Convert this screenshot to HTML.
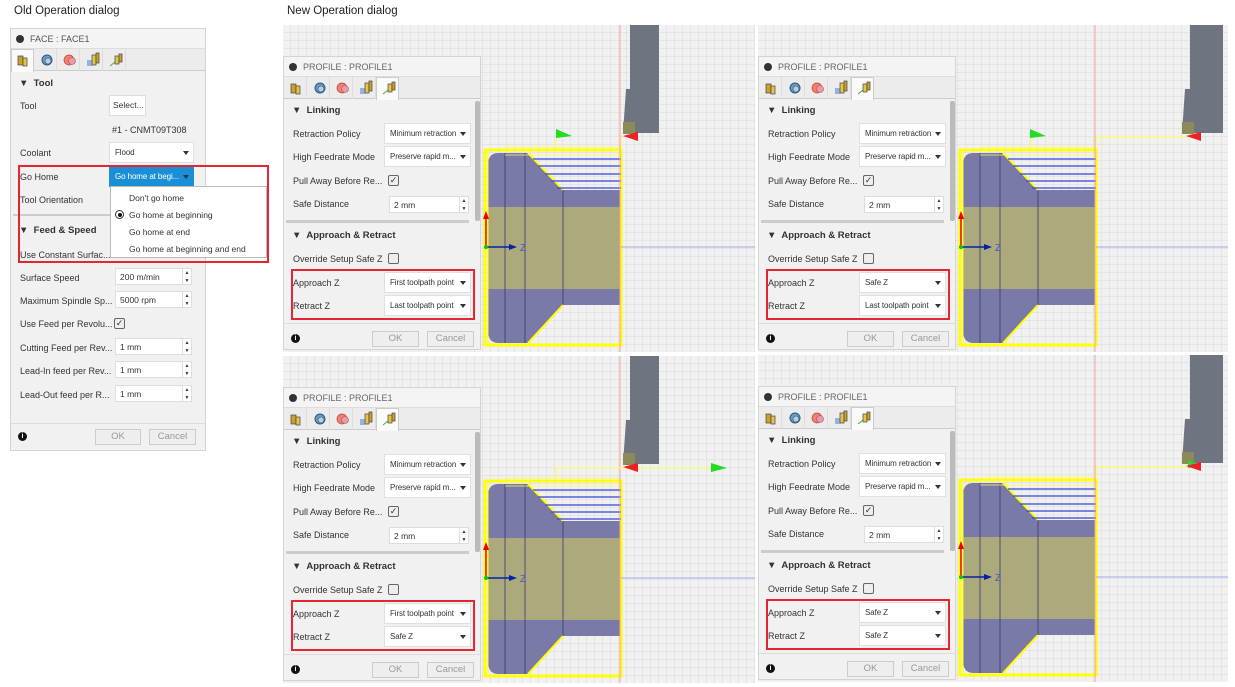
<!DOCTYPE html>
<html><head><meta charset="utf-8"><style>
*{box-sizing:border-box;margin:0;padding:0}
body{width:1235px;height:687px;background:#fff;position:relative;overflow:hidden;font-family:"Liberation Sans",sans-serif;color:#333}
.a{position:absolute}
.cap{font-size:11.5px;color:#222}
.panel{position:absolute;width:472px;height:327px;overflow:hidden}
.vp{position:absolute;left:0;top:0}
.dlg{position:absolute;left:0;top:31px;width:198px;height:294px;background:#f1f1f1;border:1px solid #d4d4d4;font-size:9px}
.title{position:absolute;left:0;top:0;width:100%;height:20px;border-bottom:1px solid #ddd;background:#f4f4f4;color:#666;font-size:9px;line-height:20px;padding-left:19px}
.dot{position:absolute;left:5px;top:6px;width:8px;height:8px;border-radius:50%;background:#333}
.tabs{position:absolute;left:0;top:20px;width:100%;height:22px;border-bottom:1px solid #ccc;background:#ececec}
.tab{position:absolute;top:0;width:23px;height:22px;border-right:1px solid #ddd}
.tab.sel{background:#fafafa;border:1px solid #ccc;border-bottom:none;height:23px}
.lbl{position:absolute;left:9px;font-size:9px;color:#333}
.hdr{position:absolute;left:8px;font-size:9.5px;font-weight:bold;color:#333}
.dd{position:absolute;left:100px;width:87px;height:21px;background:#fff;border:1px solid #e0e0e0;font-size:8px;line-height:19px;padding-left:5px;color:#333;white-space:nowrap;overflow:hidden;letter-spacing:-0.1px}
.dd:after{content:"";position:absolute;right:4px;top:8px;border-left:3px solid transparent;border-right:3px solid transparent;border-top:4px solid #333}
.inp{position:absolute;background:#fff;border:1px solid #ddd;font-size:8.5px;line-height:17px;padding-left:4px}
.spin{position:absolute;right:0;top:0;width:9px;height:100%;border-left:1px solid #ddd;font-size:5px;line-height:8px;text-align:center;color:#333}
.cb{position:absolute;width:11px;height:11px;border:1px solid #666;border-radius:2px;background:#eee;font-size:9px;line-height:9px;text-align:center}
.sep{position:absolute;left:2px;width:183px;height:3px;background:#ccc}
.red{position:absolute;border:2px solid #e32630}
.btn{position:absolute;height:16px;border:1px solid #ccc;background:#eee;color:#999;font-size:9.5px;text-align:center;line-height:14px}
.info{position:absolute;width:9px;height:9px;border-radius:50%;background:#111;color:#fff;font-size:7px;font-weight:bold;text-align:center;line-height:9px}
.sb{position:absolute;left:191px;top:44px;width:5px;height:120px;background:#bbb;border-radius:2px}
</style></head><body>
<div class="a cap" style="left:14px;top:5px">Old Operation dialog</div>
<div class="a cap" style="left:287px;top:5px">New Operation dialog</div>

<svg width="0" height="0" style="position:absolute">
<defs>
<pattern id="g" width="8" height="8" patternUnits="userSpaceOnUse"><rect width="8" height="8" fill="#f1f1f1"/><path d="M8 0V8M0 8H8" stroke="#d9d9d9" stroke-width="1"/></pattern>
<g id="tabicons">
<g transform="translate(7,5)"><rect x="0" y="2" width="5" height="9" fill="#c9a22a" stroke="#444" stroke-width=".7"/><rect x="5" y="4" width="4" height="8" fill="#e6c34a" stroke="#444" stroke-width=".7"/></g>
<g transform="translate(30,5)"><circle cx="6" cy="6" r="5" fill="#6a9ac0" stroke="#2a5a80"/><circle cx="7" cy="7" r="3" fill="#bcd" stroke="#2a5a80" stroke-width=".6"/></g>
<g transform="translate(53,5)"><circle cx="5" cy="6" r="5" fill="#f08070" stroke="#c04030" stroke-width=".7"/><circle cx="8" cy="7" r="3.5" fill="#e9a" stroke="#a55" stroke-width=".6"/></g>
<g transform="translate(76,4)"><path d="M0 8H6M0 10H6M0 12H6" stroke="#3a7bd5"/><rect x="5" y="2" width="4" height="10" fill="#e6c34a" stroke="#444" stroke-width=".7"/><rect x="9" y="0" width="3" height="10" fill="#c9a22a" stroke="#444" stroke-width=".7"/></g>
<g transform="translate(99,4)"><path d="M0 13L5 9" stroke="#3b3"/><rect x="5" y="3" width="4" height="8" fill="#e6c34a" stroke="#444" stroke-width=".7"/><rect x="9" y="1" width="3" height="8" fill="#c9a22a" stroke="#444" stroke-width=".7"/></g>
</g>
<g id="part">
<rect x="202" y="125" width="136" height="195" fill="none" stroke="#ffff00" stroke-width="3"/>
<path d="M215 128H245L280 165H337V280H280L245 318H215Q205 318 205 305V140Q205 128 215 128Z" fill="#7a7aa8"/>
<path d="M205 182H337V264H205Z" fill="#aca97c"/>
<path d="M222 128V318M242 128V318M280 165V280" stroke="#3a3a6a" stroke-width=".8"/>
<path d="M245 128L280 165M245 318L280 280" stroke="#ffff00" stroke-width="2"/>
<path d="M205 128V318" stroke="#ffff00" stroke-width="1"/>
<path d="M250 134H338M255 141H338M262 149H338M268 156H338M274 163H338" stroke="#3344dd" stroke-width="1.2"/>
<path d="M222 122H337M222 126H337M222 130H337" stroke="#ffff44" stroke-width=".8"/>
<path d="M337 0V327" stroke="#f4a0a0" stroke-width="1"/>
<path d="M338 222H472" stroke="#a0a8ee" stroke-width="1"/>
<path d="M203 222V192" stroke="#e00" stroke-width="1.5"/><path d="M200 194L203 186L206 194Z" fill="#e00"/>
<path d="M203 222H228" stroke="#0022aa" stroke-width="1.5"/><path d="M226 219L234 222L226 225Z" fill="#0022aa"/>
<circle cx="203" cy="222" r="2" fill="#0c0"/>
<text x="237" y="226" font-size="10" fill="#4455cc" font-family="Liberation Sans">Z</text>
</g>
</defs></svg>

<!-- OLD DIALOG -->
<div class="a" style="left:10px;top:28px;width:196px;height:423px;background:#f1f1f1;border:1px solid #d4d4d4;font-size:9px">
 <div class="title" style="color:#555">FACE : FACE1<div class="dot"></div></div>
 <div class="tabs"><div class="tab sel" style="left:0"></div><div class="tab" style="left:23px"></div><div class="tab" style="left:46px"></div><div class="tab" style="left:69px"></div><div class="tab" style="left:92px"></div>
 <svg class="a" style="left:0;top:0" width="120" height="22"><use href="#tabicons"/></svg></div>
 <div class="hdr" style="top:49px">▼&nbsp; Tool</div>
 <div class="lbl" style="top:72px">Tool</div>
 <div class="inp" style="left:98px;top:66px;width:37px;height:21px;line-height:19px;padding-left:3px">Select...</div>
 <div class="lbl" style="left:101px;top:96px">#1 - CNMT09T308</div>
 <div class="lbl" style="top:119px">Coolant</div>
 <div class="dd" style="left:98px;top:113px;width:85px">Flood</div>
 <div class="lbl" style="top:143px">Go Home</div>
 <div class="dd" style="left:98px;top:137px;width:85px;background:#1a8fd6;border-color:#1a8fd6;color:#fff">Go home at begi...</div>
 <div class="lbl" style="top:166px">Tool Orientation</div>
 <div class="sep" style="top:185px;width:190px;height:2px"></div>
 <div class="hdr" style="top:196px">▼&nbsp; Feed &amp; Speed</div>
 <div class="lbl" style="top:221px">Use Constant Surfac...</div>
 <div class="lbl" style="top:244px">Surface Speed</div>
 <div class="inp" style="left:104px;top:239px;width:77px;height:17px">200 m/min<div class="spin">▲<br>▼</div></div>
 <div class="lbl" style="top:267px">Maximum Spindle Sp...</div>
 <div class="inp" style="left:104px;top:262px;width:77px;height:17px">5000 rpm<div class="spin">▲<br>▼</div></div>
 <div class="lbl" style="top:290px">Use Feed per Revolu...</div>
 <div class="cb" style="left:103px;top:289px">✓</div>
 <div class="lbl" style="top:314px">Cutting Feed per Rev...</div>
 <div class="inp" style="left:104px;top:309px;width:77px;height:17px">1 mm<div class="spin">▲<br>▼</div></div>
 <div class="lbl" style="top:337px">Lead-In feed per Rev...</div>
 <div class="inp" style="left:104px;top:332px;width:77px;height:17px">1 mm<div class="spin">▲<br>▼</div></div>
 <div class="lbl" style="top:361px">Lead-Out feed per R...</div>
 <div class="inp" style="left:104px;top:356px;width:77px;height:17px">1 mm<div class="spin">▲<br>▼</div></div>
 <div class="a" style="left:0;top:394px;width:194px;height:1px;background:#ddd"></div>
 <div class="info" style="left:7px;top:403px">i</div>
 <div class="btn" style="left:84px;top:400px;width:46px">OK</div>
 <div class="btn" style="left:138px;top:400px;width:47px">Cancel</div>
</div>
<div class="a" style="left:110px;top:186px;width:157px;height:72px;background:#fff;border:1px solid #bbb;font-size:8.5px;color:#333">
 <div class="a" style="left:18px;top:6px">Don't go home</div>
 <div class="a" style="left:4px;top:23px;width:9px;height:9px;border-radius:50%;border:1px solid #333;background:#fff"><div class="a" style="left:1.5px;top:1.5px;width:4px;height:4px;border-radius:50%;background:#111"></div></div>
 <div class="a" style="left:18px;top:23px">Go home at beginning</div>
 <div class="a" style="left:18px;top:40px">Go home at end</div>
 <div class="a" style="left:18px;top:57px">Go home at beginning and end</div>
</div>
<div class="red" style="left:18px;top:165px;width:251px;height:98px"></div>

<!-- PANEL 1 -->
<div class="panel" style="left:283px;top:25px">
 <svg class="vp" width="472" height="327"><rect width="472" height="327" fill="url(#g)"/>
 <path d="M347 0H376V108H340L343 64H347Z" fill="#6f7580"/><rect x="340" y="97" width="12" height="12" fill="#8a8a5a"/>
 <use href="#part"/>
 <path d="M273 112V124M338 112V125" stroke="#ffff44"/>
 <path d="M273 104L289 111L273 113Z" fill="#22dd22"/><path d="M340 111L355 107V116Z" fill="#e22"/></svg>
 <div class="dlg">
  <div class="title">PROFILE : PROFILE1<div class="dot"></div></div>
  <div class="tabs"><div class="tab" style="left:0"></div><div class="tab" style="left:23px"></div><div class="tab" style="left:46px"></div><div class="tab" style="left:69px"></div><div class="tab sel" style="left:92px"></div>
  <svg class="a" style="left:0;top:0" width="120" height="22"><use href="#tabicons"/></svg></div>
  <div class="sb"></div>
  <div class="hdr" style="top:48px">▼&nbsp; Linking</div>
  <div class="lbl" style="top:72px">Retraction Policy</div><div class="dd" style="top:66px">Minimum retraction</div>
  <div class="lbl" style="top:95px">High Feedrate Mode</div><div class="dd" style="top:89px">Preserve rapid m...</div>
  <div class="lbl" style="top:119px">Pull Away Before Re...</div><div class="cb" style="left:104px;top:118px">✓</div>
  <div class="lbl" style="top:142px">Safe Distance</div><div class="inp" style="left:105px;top:139px;width:80px;height:17px">2 mm<div class="spin">▲<br>▼</div></div>
  <div class="sep" style="top:163px"></div>
  <div class="hdr" style="top:173px">▼&nbsp; Approach &amp; Retract</div>
  <div class="lbl" style="top:197px">Override Setup Safe Z</div><div class="cb" style="left:104px;top:196px"></div>
  <div class="lbl" style="top:221px">Approach Z</div><div class="dd" style="top:215px">First toolpath point</div>
  <div class="lbl" style="top:244px">Retract Z</div><div class="dd" style="top:238px">Last toolpath point</div>
  <div class="red" style="left:7px;top:212px;width:184px;height:51px"></div>
  <div class="a" style="left:0;top:266px;width:196px;height:1px;background:#ddd"></div>
  <div class="info" style="left:7px;top:277px">i</div>
  <div class="btn" style="left:88px;top:274px;width:47px">OK</div>
  <div class="btn" style="left:143px;top:274px;width:47px">Cancel</div>
 </div>
</div>

<!-- PANEL 2 -->
<div class="panel" style="left:758px;top:25px;width:470px">
 <svg class="vp" width="470" height="327"><rect width="470" height="327" fill="url(#g)"/>
 <path d="M432 0H465V108H424L427 64H432Z" fill="#6f7580"/><rect x="424" y="97" width="12" height="12" fill="#8a8a5a"/>
 <use href="#part"/>
 <path d="M273 112V124M338 125V112H429" stroke="#ffff44" fill="none"/>
 <path d="M272 104L288 111L272 113Z" fill="#22dd22"/><path d="M428 111L443 107V116Z" fill="#e22"/></svg>
 <div class="dlg">
  <div class="title">PROFILE : PROFILE1<div class="dot"></div></div>
  <div class="tabs"><div class="tab" style="left:0"></div><div class="tab" style="left:23px"></div><div class="tab" style="left:46px"></div><div class="tab" style="left:69px"></div><div class="tab sel" style="left:92px"></div>
  <svg class="a" style="left:0;top:0" width="120" height="22"><use href="#tabicons"/></svg></div>
  <div class="sb"></div>
  <div class="hdr" style="top:48px">▼&nbsp; Linking</div>
  <div class="lbl" style="top:72px">Retraction Policy</div><div class="dd" style="top:66px">Minimum retraction</div>
  <div class="lbl" style="top:95px">High Feedrate Mode</div><div class="dd" style="top:89px">Preserve rapid m...</div>
  <div class="lbl" style="top:119px">Pull Away Before Re...</div><div class="cb" style="left:104px;top:118px">✓</div>
  <div class="lbl" style="top:142px">Safe Distance</div><div class="inp" style="left:105px;top:139px;width:80px;height:17px">2 mm<div class="spin">▲<br>▼</div></div>
  <div class="sep" style="top:163px"></div>
  <div class="hdr" style="top:173px">▼&nbsp; Approach &amp; Retract</div>
  <div class="lbl" style="top:197px">Override Setup Safe Z</div><div class="cb" style="left:104px;top:196px"></div>
  <div class="lbl" style="top:221px">Approach Z</div><div class="dd" style="top:215px">Safe Z</div>
  <div class="lbl" style="top:244px">Retract Z</div><div class="dd" style="top:238px">Last toolpath point</div>
  <div class="red" style="left:7px;top:212px;width:184px;height:51px"></div>
  <div class="a" style="left:0;top:266px;width:196px;height:1px;background:#ddd"></div>
  <div class="info" style="left:7px;top:277px">i</div>
  <div class="btn" style="left:88px;top:274px;width:47px">OK</div>
  <div class="btn" style="left:143px;top:274px;width:47px">Cancel</div>
 </div>
</div>

<!-- PANEL 3 -->
<div class="panel" style="left:283px;top:356px">
 <svg class="vp" width="472" height="327"><rect width="472" height="327" fill="url(#g)"/>
 <path d="M347 0H376V108H340L343 64H347Z" fill="#6f7580"/><rect x="340" y="97" width="12" height="12" fill="#8a8a5a"/>
 <use href="#part"/>
 <path d="M273 124V112H430" stroke="#ffff44" fill="none"/>
 <path d="M428 107L444 112L428 116Z" fill="#22dd22"/><path d="M340 111L355 107V116Z" fill="#e22"/></svg>
 <div class="dlg">
  <div class="title">PROFILE : PROFILE1<div class="dot"></div></div>
  <div class="tabs"><div class="tab" style="left:0"></div><div class="tab" style="left:23px"></div><div class="tab" style="left:46px"></div><div class="tab" style="left:69px"></div><div class="tab sel" style="left:92px"></div>
  <svg class="a" style="left:0;top:0" width="120" height="22"><use href="#tabicons"/></svg></div>
  <div class="sb"></div>
  <div class="hdr" style="top:48px">▼&nbsp; Linking</div>
  <div class="lbl" style="top:72px">Retraction Policy</div><div class="dd" style="top:66px">Minimum retraction</div>
  <div class="lbl" style="top:95px">High Feedrate Mode</div><div class="dd" style="top:89px">Preserve rapid m...</div>
  <div class="lbl" style="top:119px">Pull Away Before Re...</div><div class="cb" style="left:104px;top:118px">✓</div>
  <div class="lbl" style="top:142px">Safe Distance</div><div class="inp" style="left:105px;top:139px;width:80px;height:17px">2 mm<div class="spin">▲<br>▼</div></div>
  <div class="sep" style="top:163px"></div>
  <div class="hdr" style="top:173px">▼&nbsp; Approach &amp; Retract</div>
  <div class="lbl" style="top:197px">Override Setup Safe Z</div><div class="cb" style="left:104px;top:196px"></div>
  <div class="lbl" style="top:221px">Approach Z</div><div class="dd" style="top:215px">First toolpath point</div>
  <div class="lbl" style="top:244px">Retract Z</div><div class="dd" style="top:238px">Safe Z</div>
  <div class="red" style="left:7px;top:212px;width:184px;height:51px"></div>
  <div class="a" style="left:0;top:266px;width:196px;height:1px;background:#ddd"></div>
  <div class="info" style="left:7px;top:277px">i</div>
  <div class="btn" style="left:88px;top:274px;width:47px">OK</div>
  <div class="btn" style="left:143px;top:274px;width:47px">Cancel</div>
 </div>
</div>

<!-- PANEL 4 -->
<div class="panel" style="left:758px;top:355px;width:470px">
 <svg class="vp" width="470" height="327"><rect width="470" height="327" fill="url(#g)"/>
 <path d="M432 0H465V108H424L427 64H432Z" fill="#6f7580"/><rect x="424" y="97" width="12" height="12" fill="#8a8a5a"/>
 <use href="#part"/>
 <path d="M338 125V112H429" stroke="#ffff44" fill="none"/>
 <path d="M430 105L443 111L430 113Z" fill="#22dd22"/><path d="M428 111L443 107V116Z" fill="#e22"/></svg>
 <div class="dlg">
  <div class="title">PROFILE : PROFILE1<div class="dot"></div></div>
  <div class="tabs"><div class="tab" style="left:0"></div><div class="tab" style="left:23px"></div><div class="tab" style="left:46px"></div><div class="tab" style="left:69px"></div><div class="tab sel" style="left:92px"></div>
  <svg class="a" style="left:0;top:0" width="120" height="22"><use href="#tabicons"/></svg></div>
  <div class="sb"></div>
  <div class="hdr" style="top:48px">▼&nbsp; Linking</div>
  <div class="lbl" style="top:72px">Retraction Policy</div><div class="dd" style="top:66px">Minimum retraction</div>
  <div class="lbl" style="top:95px">High Feedrate Mode</div><div class="dd" style="top:89px">Preserve rapid m...</div>
  <div class="lbl" style="top:119px">Pull Away Before Re...</div><div class="cb" style="left:104px;top:118px">✓</div>
  <div class="lbl" style="top:142px">Safe Distance</div><div class="inp" style="left:105px;top:139px;width:80px;height:17px">2 mm<div class="spin">▲<br>▼</div></div>
  <div class="sep" style="top:163px"></div>
  <div class="hdr" style="top:173px">▼&nbsp; Approach &amp; Retract</div>
  <div class="lbl" style="top:197px">Override Setup Safe Z</div><div class="cb" style="left:104px;top:196px"></div>
  <div class="lbl" style="top:221px">Approach Z</div><div class="dd" style="top:215px">Safe Z</div>
  <div class="lbl" style="top:244px">Retract Z</div><div class="dd" style="top:238px">Safe Z</div>
  <div class="red" style="left:7px;top:212px;width:184px;height:51px"></div>
  <div class="a" style="left:0;top:266px;width:196px;height:1px;background:#ddd"></div>
  <div class="info" style="left:7px;top:277px">i</div>
  <div class="btn" style="left:88px;top:274px;width:47px">OK</div>
  <div class="btn" style="left:143px;top:274px;width:47px">Cancel</div>
 </div>
</div>
</body></html>
